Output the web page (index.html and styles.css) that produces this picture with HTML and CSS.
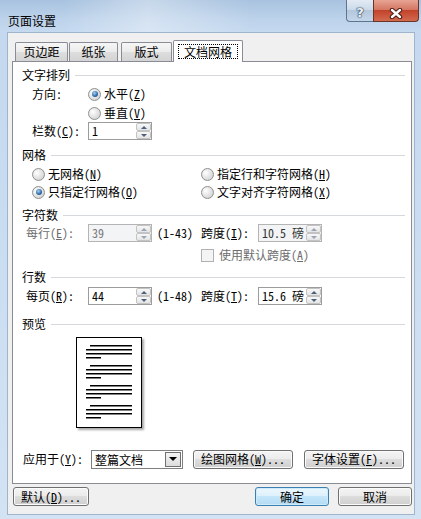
FILE: index.html
```html
<!DOCTYPE html>
<html lang="zh-CN">
<head>
  <meta charset="UTF-8" />
  <title>页面设置</title>
  <link rel="stylesheet" href="styles.css">
</head>
<body>
  <div class="window">
    <div class="titlebar">
      <div class="title">页面设置</div>
      <div class="caption-buttons">
        <div class="cap-btn help">?</div>
        <div class="cap-btn close">
          <svg width="14" height="11" viewBox="0 0 14 11">
            <path d="M3 2 L11 9 M11 2 L3 9" stroke="#4a1a12" stroke-width="4.4" stroke-linecap="round" fill="none"/>
            <path d="M3 2 L11 9 M11 2 L3 9" stroke="#ffffff" stroke-width="2.4" stroke-linecap="round" fill="none"/>
          </svg>
        </div>
      </div>
    </div>

    <div class="client">
      <div class="tabs">
        <div class="tab t1">页边距</div>
        <div class="tab t2">纸张</div>
        <div class="tab t3">版式</div>
        <div class="tab t4 active"><span class="focus">文档网格</span></div>
      </div>

      <div class="panel">
        <div class="group-title first">文字排列</div>
        <div class="row indent">
          <span class="label">方向:</span>
          <span class="option"><span class="radio checked"></span>水平(<u>Z</u>)</span>
        </div>
        <div class="row indent">
          <span class="label"></span>
          <span class="option"><span class="radio"></span>垂直(<u>V</u>)</span>
        </div>
        <div class="row indent flush">
          <span class="label">栏数(<u>C</u>):</span>
          <div class="spin">
            <span class="value">1</span>
            <span class="arrows"><span class="arrow up"></span><span class="arrow down"></span></span>
          </div>
        </div>

        <div class="group-title after-spin">网格</div>
        <div class="row indent">
          <span class="option col-left"><span class="radio"></span>无网格(<u>N</u>)</span>
          <span class="option"><span class="radio"></span>指定行和字符网格(<u>H</u>)</span>
        </div>
        <div class="row indent flush">
          <span class="option col-left"><span class="radio checked"></span>只指定行网格(<u>O</u>)</span>
          <span class="option"><span class="radio"></span>文字对齐字符网格(<u>X</u>)</span>
        </div>

        <div class="group-title">字符数</div>
        <div class="row count flush">
          <span class="label wide muted">每行(<u>E</u>):</span>
          <div class="spin disabled">
            <span class="value">39</span>
            <span class="arrows"><span class="arrow up"></span><span class="arrow down"></span></span>
          </div>
          <span class="range">(1-43)</span>
          <span class="label pitch">跨度(<u>I</u>):</span>
          <div class="spin disabled">
            <span class="value dark">10.5 磅</span>
            <span class="arrows"><span class="arrow up"></span><span class="arrow down"></span></span>
          </div>
        </div>
        <div class="row check-row">
          <span class="checkbox"></span>
          <span class="muted">使用默认跨度(<u>A</u>)</span>
        </div>

        <div class="group-title after-check">行数</div>
        <div class="row count">
          <span class="label wide">每页(<u>R</u>):</span>
          <div class="spin">
            <span class="value">44</span>
            <span class="arrows"><span class="arrow up"></span><span class="arrow down"></span></span>
          </div>
          <span class="range">(1-48)</span>
          <span class="label pitch">跨度(<u>T</u>):</span>
          <div class="spin">
            <span class="value">15.6 磅</span>
            <span class="arrows"><span class="arrow up"></span><span class="arrow down"></span></span>
          </div>
        </div>

        <div class="group-title preview-title">预览</div>
        <div class="preview">
          <svg width="64" height="89" viewBox="0 0 64 89">
            <g fill="#000">
              <rect x="13" y="7" width="42" height="1.5"/>
              <rect x="9" y="11" width="46" height="1.5"/>
              <rect x="9" y="15" width="46" height="1.5"/>
              <rect x="9" y="19" width="15" height="1.5"/>
              <rect x="13" y="27" width="42" height="1.5"/>
              <rect x="9" y="31" width="46" height="1.5"/>
              <rect x="9" y="35" width="46" height="1.5"/>
              <rect x="9" y="39" width="15" height="1.5"/>
              <rect x="13" y="47" width="42" height="1.5"/>
              <rect x="9" y="51" width="46" height="1.5"/>
              <rect x="9" y="55" width="46" height="1.5"/>
              <rect x="9" y="59" width="15" height="1.5"/>
              <rect x="13" y="67" width="42" height="1.5"/>
              <rect x="9" y="71" width="46" height="1.5"/>
              <rect x="9" y="75" width="46" height="1.5"/>
              <rect x="9" y="79" width="15" height="1.5"/>
            </g>
          </svg>
        </div>

        <div class="apply-row">
          <span class="apply-label">应用于(<u>Y</u>):</span>
          <div class="select">
            <span class="value">整篇文档</span>
            <span class="drop"><span class="drop-arrow"></span></span>
          </div>
          <div class="btn grid-btn">绘图网格(<u>W</u>)...</div>
          <div class="btn font-btn">字体设置(<u>F</u>)...</div>
        </div>
      </div>

      <div class="dialog-buttons">
        <div class="btn default-btn">默认(<u>D</u>)...</div>
        <div class="btn ok-btn">确定</div>
        <div class="btn cancel-btn">取消</div>
      </div>
    </div>
  </div>
</body>
</html>
```

FILE: styles.css
```css
body {
  margin: 0;
  width: 421px;
  height: 519px;
  overflow: hidden;
  font-family: "Noto Sans Mono CJK SC", "Noto Sans CJK SC", sans-serif;
  font-size: 12px;
  line-height: 14px;
  color: #000;
}
u {
  text-decoration: underline;
  text-underline-offset: 1px;
}
.window {
  display: flex;
  flex-direction: column;
  height: 519px;
  padding: 0 6px 4px 7px;
  box-sizing: border-box;
  background: linear-gradient(to bottom, #c3d7ee, #d3e3f4);
}
.titlebar {
  display: flex;
  align-items: flex-start;
  height: 32px;
  margin: 0 -6px 0 -7px;
  background:
    linear-gradient(to right, rgba(255,255,255,0) 15%, rgba(255,255,255,0.35) 35%, rgba(255,255,255,0) 60%),
    linear-gradient(to bottom, #a8c2df, #bdd3eb 60%, #c5d9ef);
}
.title {
  padding: 14px 0 0 8px;
  color: #000;
}
.caption-buttons {
  display: flex;
  margin-left: auto;
  margin-right: 2px;
}
.cap-btn {
  height: 22px;
  box-sizing: border-box;
  display: flex;
  justify-content: center;
  align-items: center;
}
.help {
  width: 27px;
  border: 1px solid #5e7590;
  border-top: none;
  border-right: none;
  border-radius: 0 0 0 4px;
  background: linear-gradient(to bottom, #e3ebf4, #c9d8e8 50%, #b4c7dc 50%, #c4d6ea);
  color: #eef3f8;
  font-family: "DejaVu Sans", sans-serif;
  font-weight: bold;
  font-size: 13px;
  padding-top: 4px;
  text-shadow: 0 0 1px #283f5c, 0 0 1px #283f5c, 0 0 2px #283f5c;
}
.close {
  width: 46px;
  border: 1px solid #6b3428;
  border-top: none;
  border-radius: 0 0 4px 0;
  background: linear-gradient(to bottom, #e8a493, #d2735f 50%, #c2432b 50%, #d26a4f);
  padding-top: 5px;
}
.client {
  flex: 1;
  display: flex;
  flex-direction: column;
  background: #f0f0f0;
  border: 1px solid #9fb5cc;
  padding: 7px 2px 8px 4px;
}

/* tabs */
.tabs {
  display: flex;
  align-items: flex-end;
  height: 21px;
  padding-left: 3px;
}
.tab {
  height: 19px;
  box-sizing: border-box;
  border: 1px solid #898c95;
  border-bottom: none;
  border-radius: 2px 2px 0 0;
  background: linear-gradient(to bottom, #f6f6f6, #ebebeb 50%, #dedede 50%, #d3d3d3);
  display: flex;
  justify-content: center;
  align-items: center;
}
.t1 { width: 53px; }
.t2 { width: 49px; margin-left: 1px; }
.t3 { width: 51px; margin-left: 3px; }
.t4 { width: 70px; margin-left: 1px; }
.tab.active {
  height: 22px;
  margin-bottom: -1px;
  background: #fff;
  position: relative;
  z-index: 1;
  padding-bottom: 1px;
}
.focus {
  outline: 1px dotted #000;
  padding: 0 5px;
  height: 13px;
  line-height: 13px;
}

/* panel */
.panel {
  background: #fff;
  border: 1px solid #898c95;
  padding: 4px 6px 14px 9px;
}
.group-title {
  display: flex;
  align-items: center;
  height: 18px;
  margin-top: 5px;
}
.group-title::after {
  content: "";
  flex: 1;
  height: 1px;
  margin-left: 5px;
  background: #d5d9de;
}
.group-title.first { margin-top: 0; }
.group-title.after-spin { margin-top: 6px; }
.group-title.after-check { margin-top: 4px; }
.group-title.preview-title { margin-top: 10px; }

.row {
  display: flex;
  align-items: center;
  height: 18px;
  margin-top: 1px;
}
.row.flush { margin-top: 0; }
.row.indent { padding-left: 10px; }
.row.count { padding-left: 4px; }
.row.check-row {
  margin-top: 4px;
  padding-left: 179px;
}
.label { width: 56px; }
.label.wide { width: 62px; }
.label.pitch { width: 57px; }
.muted { color: #6d6d6d; }
.option {
  display: flex;
  align-items: center;
}
.col-left { width: 169px; }
.range { width: 44px; margin-left: 5px; }

.radio {
  width: 13px;
  height: 13px;
  box-sizing: border-box;
  margin-right: 3px;
  border-radius: 50%;
  border: 1px solid #8e8f8f;
  background: radial-gradient(circle at 35% 35%, #ffffff, #e6e6e6 45%, #cfcfcf 90%);
  display: flex;
  justify-content: center;
  align-items: center;
}
.radio.checked::after {
  content: "";
  width: 6px;
  height: 6px;
  border-radius: 50%;
  background: radial-gradient(circle at 40% 35%, #a8d3f5, #2c67a3 60%, #1b4a7d);
}
.checkbox {
  width: 13px;
  height: 13px;
  box-sizing: border-box;
  margin-right: 5px;
  border: 1px solid #b1b1b1;
  background: #f4f4f4;
}

/* spin boxes */
.spin {
  display: flex;
  width: 64px;
  height: 18px;
  box-sizing: border-box;
  border: 1px solid #9c9c9c;
  background: #fff;
}
.spin .value {
  flex: 1;
  padding-left: 3px;
  line-height: 16px;
  white-space: nowrap;
}
.arrows {
  display: flex;
  flex-direction: column;
  width: 15px;
}
.arrow {
  flex: 1;
  box-sizing: border-box;
  border: 1px solid #c3c3c3;
  border-radius: 2px;
  background: linear-gradient(to bottom, #f8f8f8, #e4e4e4);
  display: flex;
  justify-content: center;
  align-items: center;
}
.arrow::before {
  content: "";
  width: 0;
  height: 0;
  border-left: 3px solid transparent;
  border-right: 3px solid transparent;
}
.arrow.up::before { border-bottom: 3px solid #4c607a; }
.arrow.down::before { border-top: 3px solid #4c607a; }
.spin.disabled {
  background: #f2f4f6;
  border-color: #b4b4b4;
}
.spin.disabled .value { color: #7a7a7a; }
.spin.disabled .value.dark { color: #333; }
.spin.disabled .arrow.up::before { border-bottom-color: #9aa5b3; }
.spin.disabled .arrow.down::before { border-top-color: #9aa5b3; }

/* preview */
.preview {
  width: 66px;
  height: 91px;
  box-sizing: border-box;
  margin: 4px 0 0 54px;
  border: 1px solid #000;
  background: #fff;
  box-shadow: 2px 2px 2px rgba(0,0,0,0.35);
}
.preview svg { display: block; }

/* bottom rows */
.apply-row {
  display: flex;
  align-items: center;
  height: 20px;
  margin-top: 21px;
  padding-left: 1px;
}
.apply-label { width: 68px; }
.select {
  display: flex;
  width: 92px;
  height: 19px;
  box-sizing: border-box;
  border: 1px solid #7f7f7f;
  background: #fff;
}
.select .value {
  flex: 1;
  padding-left: 3px;
  line-height: 17px;
}
.drop {
  width: 16px;
  box-sizing: border-box;
  margin: 1px;
  border: 1px solid #707070;
  background: linear-gradient(to bottom, #f4f4f4, #dcdcdc);
  display: flex;
  justify-content: center;
  align-items: center;
}
.drop-arrow {
  width: 0;
  height: 0;
  border-left: 4px solid transparent;
  border-right: 4px solid transparent;
  border-top: 4px solid #000;
}
.btn {
  height: 19px;
  box-sizing: border-box;
  border: 1px solid #707070;
  border-radius: 3px;
  background: linear-gradient(to bottom, #f4f4f4, #ebebeb 50%, #dddddd 50%, #cfcfcf);
  box-shadow: inset 0 0 0 1px #fbfbfb;
  display: flex;
  justify-content: center;
  align-items: center;
  white-space: nowrap;
}
.grid-btn { width: 100px; margin-left: 10px; }
.font-btn { width: 100px; margin-left: 11px; }
.dialog-buttons {
  display: flex;
  margin-top: 3px;
}
.default-btn { width: 76px; margin-left: 1px; }
.ok-btn {
  width: 74px;
  margin-left: auto;
  border-color: #3c7fb1;
  background: linear-gradient(to bottom, #edf7fd, #dcf0fc 50%, #c4e6fb 50%, #b4dbf3);
  box-shadow: inset 0 0 0 1px #cdebfb;
}
.cancel-btn { width: 74px; margin-left: 9px; }
```
